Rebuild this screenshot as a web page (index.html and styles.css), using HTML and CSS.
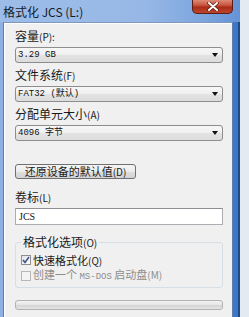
FILE: index.html
```html
<!DOCTYPE html>
<html lang="zh-CN">
<head>
<meta charset="utf-8">
<link rel="stylesheet" href="styles.css">
</head>
<body>
<div class="window">
  <div class="titlebar">
    <span class="title">格式化 JCS (L:)</span>
    <div class="close">
      <svg width="12" height="9" viewBox="0 0 12 9"><path d="M2 1 L10 8 M10 1 L2 8" stroke="#5a1a10" stroke-width="3.4" stroke-linecap="round"/><path d="M2 1 L10 8 M10 1 L2 8" stroke="#ffffff" stroke-width="2" stroke-linecap="round"/></svg>
    </div>
  </div>
  <div class="frame">
    <div class="panel">
      <div class="label">容量<span class="key">(P):</span></div>
      <div class="combo"><span class="mono">3.29 GB</span><span class="arrow"></span></div>
      <div class="label">文件系统<span class="key">(F)</span></div>
      <div class="combo"><span class="mono">FAT32 (默认)</span><span class="arrow"></span></div>
      <div class="label">分配单元大小<span class="key">(A)</span></div>
      <div class="combo"><span class="mono">4096 字节</span><span class="arrow"></span></div>
      <div class="button">还原设备的默认值<span class="key">(D)</span></div>
      <div class="label label-vol">卷标<span class="key">(L)</span></div>
      <div class="textbox">JCS</div>
      <fieldset class="group">
        <legend>格式化选项<span class="key">(O)</span></legend>
        <div class="check first">
          <span class="box checked"><svg width="8" height="8" viewBox="0 0 8 8"><path d="M1 4 L3 6.5 L7 1" fill="none" stroke="#3c5590" stroke-width="1.6"/></svg></span>
          <span class="ctext">快速格式化<span class="key">(Q)</span></span>
        </div>
        <div class="check disabled">
          <span class="box"></span>
          <span class="ctext">创建一个 <span class="mono-s">MS-DOS</span> 启动盘<span class="key">(M)</span></span>
        </div>
      </fieldset>
      <div class="progress"></div>
    </div>
  </div>
</div>
</body>
</html>
```
FILE: styles.css
```css
html, body {
  margin: 0;
  padding: 0;
}
body {
  background: #e4eaf2;
  width: 249px;
  height: 317px;
  overflow: hidden;
  font-family: "Noto Sans CJK SC", "Noto Sans", sans-serif;
  color: #1a1a1a;
}
.window {
  width: 240px;
  height: 317px;
  display: flex;
  flex-direction: column;
  background: #8fb1e1;
}
.titlebar {
  height: 22px;
  display: flex;
  align-items: flex-start;
  background: linear-gradient(to right, #9dbce8 0%, #97b8e6 60%, #7ca5de 85%, #6593d6 100%);
}
.title {
  font-size: 12px;
  line-height: 14px;
  margin: 5px 0 0 3px;
  color: #141c28;
}
.close {
  margin-left: auto;
  margin-right: 7px;
  width: 41px;
  height: 14px;
  box-sizing: border-box;
  border: 1px solid #5e1c12;
  border-top: none;
  border-radius: 0 0 5px 5px;
  background: linear-gradient(to bottom, #dc8a78 0%, #c9553f 40%, #a92c18 55%, #bd452c 100%);
  display: flex;
  align-items: center;
  justify-content: center;
}
.frame {
  flex: 1;
  display: flex;
  padding-left: 3px;
  padding-right: 7px;
  box-shadow: inset -2px 0 0 #1f4a88, inset -7px 0 0 #3b76ca;
}
.panel {
  flex: 1;
  background: #f0f0f0;
  border-top: 1px solid #7f98ba;
  border-left: 1px solid #5f7fab;
  border-right: 1px solid #5f7fab;
  padding: 5px 9px 0 11px;
  display: flex;
  flex-direction: column;
  box-shadow: inset 1px 1px 0 #ffffff;
}
.label {
  font-size: 12px;
  line-height: 16px;
  height: 16px;
  margin-bottom: 3px;
  color: #1a1a1a;
}
.key {
  font-size: 10px;
}
.combo {
  height: 16px;
  box-sizing: border-box;
  border: 1px solid #8d8d8d;
  border-radius: 3px;
  background: linear-gradient(to bottom, #f7f7f7 0%, #efefef 50%, #e3e3e3 51%, #dcdcdc 100%);
  display: flex;
  align-items: center;
  padding-left: 2px;
  padding-right: 4px;
  margin-bottom: 4px;
}
.mono {
  font-family: "Liberation Mono", "Noto Sans CJK SC", monospace;
  font-size: 9px;
  line-height: 12px;
  color: #111;
}
.mono-s {
  font-family: "Liberation Mono", monospace;
  font-size: 9px;
}
.arrow {
  margin-left: auto;
  width: 0;
  height: 0;
  border-left: 3.5px solid transparent;
  border-right: 3.5px solid transparent;
  border-top: 4px solid #111;
}
.button {
  margin-top: 19px;
  width: 121px;
  height: 15px;
  box-sizing: border-box;
  border: 1px solid #707070;
  border-radius: 3px;
  background: linear-gradient(to bottom, #f4f4f4 0%, #ececec 50%, #dedede 51%, #d3d3d3 100%);
  font-size: 11px;
  line-height: 13px;
  text-align: center;
  color: #1a1a1a;
}
.label-vol {
  margin-top: 10px;
}
.textbox {
  height: 17px;
  box-sizing: border-box;
  border: 1px solid #abadb3;
  border-top-color: #8e9095;
  background: #fff;
  font-family: "Liberation Serif", serif;
  font-size: 10px;
  line-height: 15px;
  padding-left: 3px;
  color: #111;
}
.group {
  margin: 11px 0 0 0;
  padding: 0 0 3px 5px;
  border: 1px solid #d5dfe5;
  border-radius: 3px;
  min-width: 0;
}
.group legend {
  font-size: 12px;
  line-height: 12px;
  padding: 0 2px;
  margin-left: 0;
  color: #1a1a1a;
}
.check {
  display: flex;
  align-items: center;
  height: 16px;
  gap: 2px;
}
.check.first {
  margin-top: 3px;
}
.ctext {
  font-size: 11px;
  line-height: 13px;
  white-space: nowrap;
}
.box {
  width: 10px;
  height: 10px;
  box-sizing: border-box;
  border: 1px solid #8f8f8f;
  background: linear-gradient(135deg, #e2e2e2, #fdfdfd);
  display: flex;
  align-items: center;
  justify-content: center;
  flex: none;
}
.disabled {
  color: #8e8e8e;
}
.disabled .box {
  border-color: #b8b8b8;
  background: #f4f4f4;
}
.progress {
  margin-top: 12px;
  height: 10px;
  box-sizing: border-box;
  border: 1px solid #b2b2b2;
  border-radius: 3px;
  background: linear-gradient(to bottom, #f3f3f3 0%, #e6e6e6 45%, #d6d6d6 55%, #e4e4e4 100%);
}
```
